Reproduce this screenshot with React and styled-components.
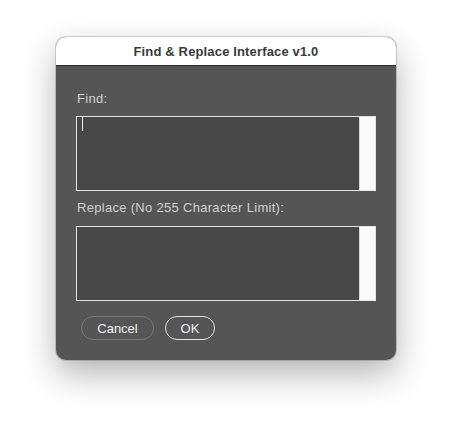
import styled, { createGlobalStyle } from "styled-components";

const GlobalStyle = createGlobalStyle`
  html, body {
    margin: 0;
    padding: 0;
    background: #ffffff;
    font-family: "Liberation Sans", Arial, sans-serif;
  }
`;

const Page = styled.div`
  width: 452px;
  height: 435px;
  display: flex;
  justify-content: center;
  align-items: flex-start;
  padding-top: 37px;
  box-sizing: border-box;
`;

const Window = styled.div`
  width: 340px;
  border-radius: 10px;
  overflow: hidden;
  background: #555555;
  box-shadow: 0 14px 34px rgba(0, 0, 0, 0.3), 0 0 0 1px rgba(0, 0, 0, 0.16);
`;

const TitleBar = styled.div`
  height: 28px;
  background: #ffffff;
  border-bottom: 1px solid #2e2e2e;
  display: flex;
  align-items: center;
  justify-content: center;
  font-size: 13px;
  font-weight: bold;
  letter-spacing: 0.15px;
  color: #3a3a3a;
`;

const Body = styled.div`
  padding: 25px 20px 20px 20px;
  display: flex;
  flex-direction: column;
`;

const Label = styled.div`
  font-size: 13px;
  line-height: 16px;
  letter-spacing: 0.3px;
  color: #d0d0d0;
  padding-left: 1px;
  margin-top: ${(p) => p.$top || 0}px;
  margin-bottom: ${(p) => p.$bottom || 0}px;
`;

const Field = styled.div`
  height: 75px;
  border: 1px solid #e4e4e4;
  box-sizing: border-box;
  display: flex;
`;

const Text = styled.div`
  flex: 1;
  background: #484848;
  padding-left: 5px;
`;

const Caret = styled.div`
  width: 1px;
  height: 14px;
  background: #f0f0f0;
`;

const Track = styled.div`
  width: 15px;
  background: #fafafa;
  border-left: 1px solid #d8d8d8;
`;

const Buttons = styled.div`
  display: flex;
  gap: 11px;
  margin-top: 15px;
  padding-left: 5px;
`;

const Button = styled.button`
  height: 24px;
  width: ${(p) => p.$w}px;
  border-radius: 12px;
  background: transparent;
  border: 1px solid ${(p) => (p.$primary ? "#e2e2e2" : "#7c7c7c")};
  color: #f2f2f2;
  font-family: "Liberation Sans", Arial, sans-serif;
  font-size: 13px;
  padding: 0;
  box-sizing: border-box;
`;

export default function App() {
  return (
    <>
      <GlobalStyle />
      <Page>
        <Window>
          <TitleBar>Find &amp; Replace Interface v1.0</TitleBar>
          <Body>
            <Label $bottom={9}>Find:</Label>
            <Field>
              <Text>
                <Caret />
              </Text>
              <Track />
            </Field>
            <Label $top={9} $bottom={10}>
              Replace (No 255 Character Limit):
            </Label>
            <Field>
              <Text />
              <Track />
            </Field>
            <Buttons>
              <Button $w={73}>Cancel</Button>
              <Button $w={50} $primary>
                OK
              </Button>
            </Buttons>
          </Body>
        </Window>
      </Page>
    </>
  );
}
